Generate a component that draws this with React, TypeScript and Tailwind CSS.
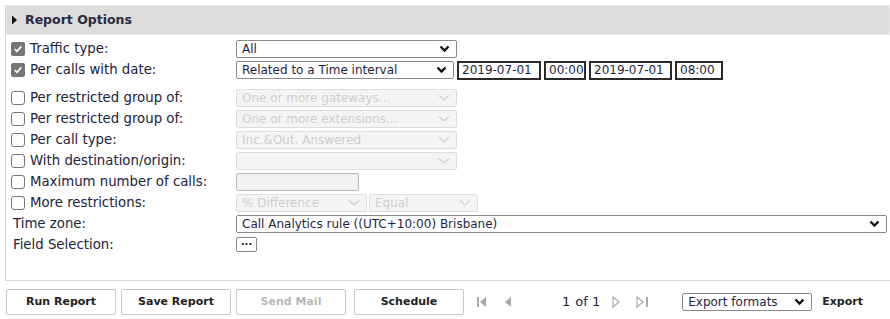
import React from "react";

const font = { fontFamily: '"DejaVu Sans", Verdana, sans-serif' };

const Chevron = ({ disabled }: { disabled?: boolean }) =>
  disabled ? (
    <svg width="12" height="8" viewBox="0 0 12 8">
      <path d="M1 1.5 L6 6 L11 1.5" fill="none" stroke="#d0d0d0" strokeWidth="1.3" />
    </svg>
  ) : (
    <svg width="11" height="8" viewBox="0 0 11 8">
      <path d="M1.5 1.5 L5.5 5.5 L9.5 1.5" fill="none" stroke="#111" strokeWidth="2.4" />
    </svg>
  );

const Select = ({
  text,
  width,
  disabled,
}: {
  text: string;
  width: string;
  disabled?: boolean;
}) => (
  <div
    className={`flex h-[18px] items-center justify-between rounded-[2px] border pl-[5px] pr-[6px] text-[12px] ${width} ${
      disabled
        ? "border-[#dedede] bg-[#f4f4f4] text-[#cfcfcf]"
        : "border-[#8a8a8a] bg-white text-[#1f1f3f]"
    }`}
  >
    <span className="whitespace-nowrap leading-none">{text}</span>
    <Chevron disabled={disabled} />
  </div>
);

const Check = ({ checked }: { checked?: boolean }) =>
  checked ? (
    <div className="flex h-[14px] w-[14px] items-center justify-center rounded-[2px] bg-[#767676]">
      <svg width="10" height="10" viewBox="0 0 10 10">
        <path d="M1.8 5.2 L4 7.3 L8.3 2.4" fill="none" stroke="#fff" strokeWidth="1.7" />
      </svg>
    </div>
  ) : (
    <div className="h-[14px] w-[14px] rounded-[3px] border border-[#767676] bg-white" />
  );

const Row = ({
  check,
  label,
  children,
  h = "h-[21px]",
}: {
  check?: "on" | "off";
  label: string;
  children?: React.ReactNode;
  h?: string;
}) => (
  <div className={`flex items-center ${h}`}>
    <div className="flex w-[230px] items-center">
      {check ? (
        <div className="ml-[5px] mr-[5px]">
          <Check checked={check === "on"} />
        </div>
      ) : (
        <div className="w-[7px]" />
      )}
      <span className="whitespace-nowrap text-[13.3px] text-[#22223a]">{label}</span>
    </div>
    {children}
  </div>
);

const Field = ({ text, width }: { text: string; width: string }) => (
  <div
    className={`flex h-[19px] items-center border-2 border-[#2a2a2a] bg-white pl-[3px] text-[12px] text-[#1f1f3f] ${width}`}
  >
    {text}
  </div>
);

const Button = ({ text, disabled }: { text: string; disabled?: boolean }) => (
  <div
    className={`flex h-[26px] w-[110px] items-center justify-center rounded-[2px] border border-[#c8c8c8] bg-white text-[11px] font-bold ${
      disabled ? "text-[#b8b8b8]" : "text-[#222]"
    }`}
  >
    {text}
  </div>
);

const App = () => {
  return (
    <div className="h-[319px] w-[890px] bg-white pl-[5px] pt-[5px]" style={font}>
      <div className="h-[276px] border-b border-l border-[#d8d8d8]">
        <div className="flex h-[30px] items-center border border-[#e8e8e8] bg-[#dcdcdc] pl-[4px]">
          <svg width="8" height="10" viewBox="0 0 8 10" className="mr-[6px]">
            <path d="M1 0.5 L6 5 L1 9.5 Z" fill="#111" />
          </svg>
          <span className="text-[12.5px] font-bold text-[#2a2a40]">Report Options</span>
        </div>
        <div className="pt-[3px]">
          <Row check="on" label="Traffic type:">
            <Select text="All" width="w-[221px]" />
          </Row>
          <Row check="on" label="Per calls with date:" h="h-[22px]">
            <Select text="Related to a Time interval" width="w-[218px]" />
            <div className="ml-[3px] flex gap-[3px]">
              <Field text="2019-07-01" width="w-[84px]" />
              <Field text="00:00" width="w-[42px]" />
              <Field text="2019-07-01" width="w-[83px]" />
              <Field text="08:00" width="w-[48px]" />
            </div>
          </Row>
          <div className="h-[6px]" />
          <Row check="off" label="Per restricted group of:">
            <Select text="One or more gateways..." width="w-[221px]" disabled />
          </Row>
          <Row check="off" label="Per restricted group of:">
            <Select text="One or more extensions..." width="w-[221px]" disabled />
          </Row>
          <Row check="off" label="Per call type:">
            <Select text="Inc.&Out. Answered" width="w-[221px]" disabled />
          </Row>
          <Row check="off" label="With destination/origin:">
            <Select text="" width="w-[221px]" disabled />
          </Row>
          <Row check="off" label="Maximum number of calls:">
            <div className="h-[18px] w-[123px] rounded-[2px] border border-[#b8b8b8] bg-[#f2f2f2]" />
          </Row>
          <Row check="off" label="More restrictions:">
            <div className="flex gap-[2px]">
              <Select text="% Difference" width="w-[131px]" disabled />
              <Select text="Equal" width="w-[109px]" disabled />
            </div>
          </Row>
          <Row label="Time zone:">
            <Select text="Call Analytics rule ((UTC+10:00) Brisbane)" width="w-[651px]" />
          </Row>
          <Row label="Field Selection:">
            <div className="flex h-[15px] w-[21px] items-start justify-center rounded-[2px] border border-[#8a8a8a] bg-white text-[10px] font-bold leading-[8px] text-[#222]">
              ...
            </div>
          </Row>
        </div>
      </div>
      <div className="mt-[8px] flex items-center">
        <div className="ml-[1px] flex gap-[5px]">
          <Button text="Run Report" />
          <Button text="Save Report" />
          <Button text="Send Mail" disabled />
        </div>
        <div className="ml-[8px]">
          <Button text="Schedule" />
        </div>
        <div className="ml-[12px] flex items-center gap-[16px]">
          <svg width="12" height="12" viewBox="0 0 12 12">
            <rect x="1" y="1" width="2" height="10" fill="#a8a8a8" />
            <path d="M10 1 L4 6 L10 11 Z" fill="#a8a8a8" />
          </svg>
          <svg width="8" height="12" viewBox="0 0 8 12">
            <path d="M7 1 L1 6 L7 11 Z" fill="#a8a8a8" />
          </svg>
        </div>
        <div className="ml-[50px] flex items-center text-[13px] text-[#1f1f3f]">
          <span className="text-[#2a2010]">1</span>
          <span className="ml-[5px]">of 1</span>
        </div>
        <div className="ml-[12px] flex items-center gap-[16px]">
          <svg width="8" height="12" viewBox="0 0 8 12">
            <path d="M1 1 L7 6 L1 11 Z" fill="none" stroke="#a8a8a8" strokeWidth="1.2" />
          </svg>
          <svg width="13" height="12" viewBox="0 0 13 12">
            <path d="M1 1 L7 6 L1 11 Z" fill="none" stroke="#a8a8a8" strokeWidth="1.2" />
            <rect x="10" y="1" width="2" height="10" fill="#a8a8a8" />
          </svg>
        </div>
        <div className="ml-[33px]">
          <Select text="Export formats" width="w-[130px]" />
        </div>
        <span className="ml-[10px] text-[11px] font-bold text-[#222]">Export</span>
      </div>
    </div>
  );
};

export default App;
